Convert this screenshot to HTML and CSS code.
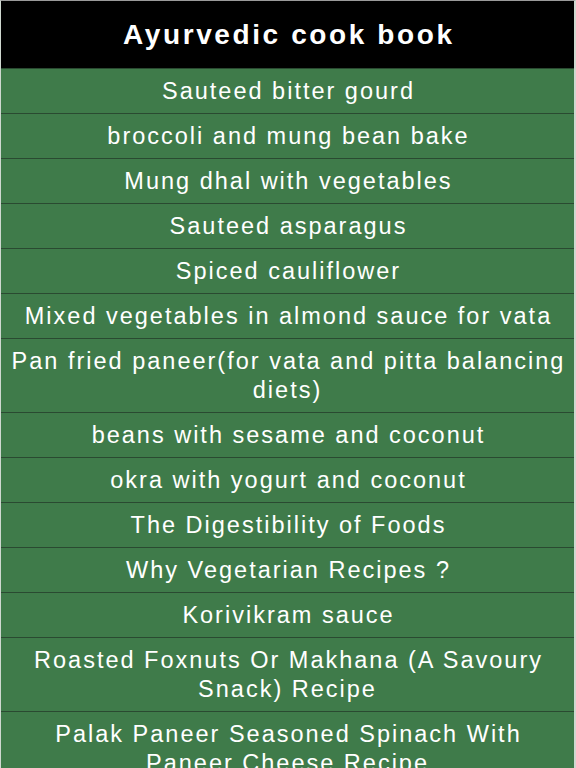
FILE: index.html
```html
<!DOCTYPE html>
<html>
<head>
<meta charset="utf-8">
<link rel="stylesheet" href="styles.css">
</head>
<body>
<div class="app">
  <div class="header">Ayurvedic cook book</div>
  <ul class="list">
    <li class="item">Sauteed bitter gourd</li>
    <li class="item">broccoli and mung bean bake</li>
    <li class="item">Mung dhal with vegetables</li>
    <li class="item">Sauteed asparagus</li>
    <li class="item">Spiced cauliflower</li>
    <li class="item">Mixed vegetables in almond sauce for vata</li>
    <li class="item">Pan fried paneer(for vata and pitta balancing diets)</li>
    <li class="item">beans with sesame and coconut</li>
    <li class="item">okra with yogurt and coconut</li>
    <li class="item">The Digestibility of Foods</li>
    <li class="item">Why Vegetarian Recipes ?</li>
    <li class="item">Korivikram sauce</li>
    <li class="item">Roasted Foxnuts Or Makhana (A Savoury Snack) Recipe</li>
    <li class="item">Palak Paneer Seasoned Spinach With Paneer Cheese Recipe</li>
  </ul>
</div>
</body>
</html>
```
FILE: styles.css
```css
html, body {
  margin: 0;
  padding: 0;
  background: #3f7b4a;
}
.app {
  width: 576px;
  height: 768px;
  overflow: hidden;
  box-sizing: border-box;
  border-left: 1px solid #cfd8d0;
  border-right: 2px solid #cfd8d0;
  border-top: 1px solid #9a9a9a;
  font-family: "Liberation Sans", Arial, sans-serif;
  background: #3f7b4a;
}
.header {
  background: #000;
  color: #fff;
  font-weight: bold;
  font-size: 28px;
  letter-spacing: 2.6px;
  text-indent: 2.6px;
  text-align: center;
  height: 67px;
  line-height: 67px;
}
.list {
  list-style: none;
  margin: 0;
  padding: 0;
}
.item {
  color: #fff;
  font-size: 23.5px;
  letter-spacing: 2px;
  text-indent: 2px;
  line-height: 29px;
  text-align: center;
  padding: 8px 8px 7px;
  border-top: 1px solid #2a4a31;
}
```
